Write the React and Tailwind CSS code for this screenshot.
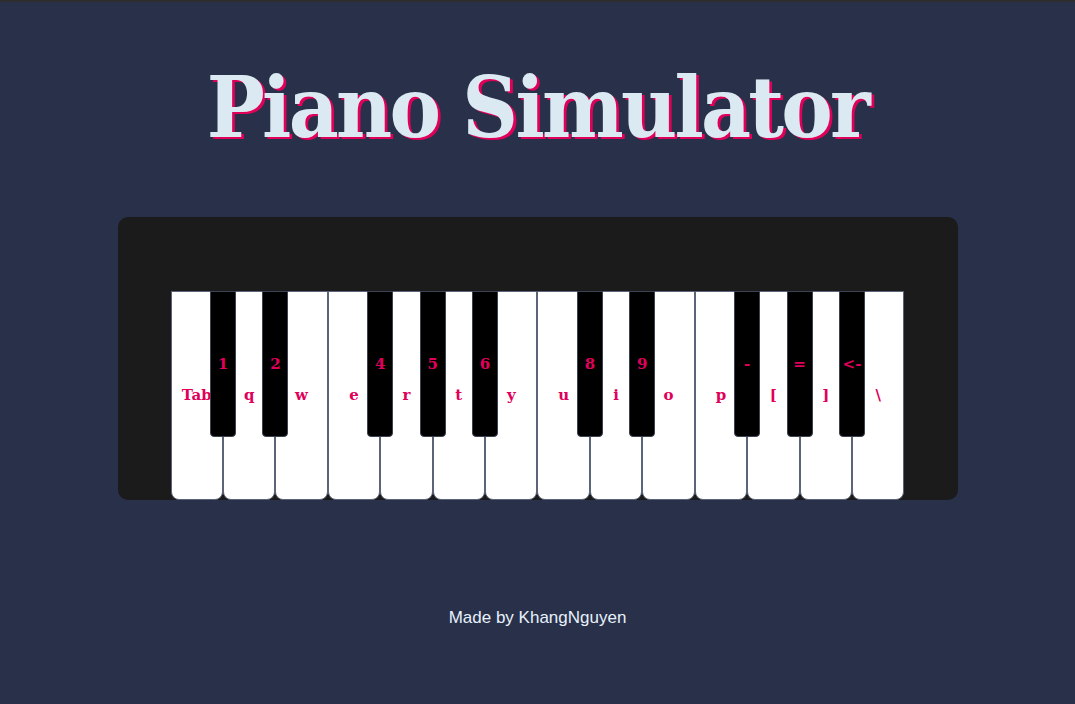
import React from 'react';

const WHITE = ['Tab', 'q', 'w', 'e', 'r', 't', 'y', 'u', 'i', 'o', 'p', '[', ']', '\\'];
// black key label sitting on the right edge of the white key with the same index
const BLACK = { 0: '1', 1: '2', 3: '4', 4: '5', 5: '6', 7: '8', 8: '9', 10: '-', 11: '=', 12: '<-' };

const WhiteKey = ({ label, black }) => (
  <div className="relative w-[52.43px] h-[209px] bg-white border border-[#5b6479] rounded-b-[8px] flex justify-center">
    <span className="mt-[92px] text-[15px] font-bold text-[#e0005a] [font-family:'DejaVu_Serif',serif]">{label}</span>
    {black && (
      <div className="absolute z-10 top-[-1px] right-[-14px] w-[26px] h-[146px] bg-black border border-[#3b4252] rounded-b-[4px] flex justify-center">
        <span className="mt-[61px] text-[15px] font-bold text-[#e0005a] [font-family:'DejaVu_Serif',serif]">{black}</span>
      </div>
    )}
  </div>
);

export default function App() {
  return (
    <div className="min-h-screen bg-[#29304a] border-t-2 border-[#2e2e2e] flex flex-col items-center">
      <h1 className="mt-[46px] text-[84px] leading-[120px] font-bold tracking-[-3px] scale-x-[0.92] text-[#dbeaf2] [text-shadow:3px_2px_0_#e0005a] [font-family:'DejaVu_Serif',serif]">
        Piano Simulator
      </h1>
      <div className="mt-[49px] w-[840px] h-[283px] bg-[#1b1b1b] rounded-[10px] pt-[74px] px-[53px] flex">
        <div className="flex">
          {WHITE.map((k, i) => (
            <WhiteKey key={k} label={k} black={BLACK[i]} />
          ))}
        </div>
      </div>
      <p className="mt-[105px] text-[17px] text-[#e6f1fb] [font-family:'Liberation_Sans',Arial,sans-serif]">Made by KhangNguyen</p>
    </div>
  );
}
